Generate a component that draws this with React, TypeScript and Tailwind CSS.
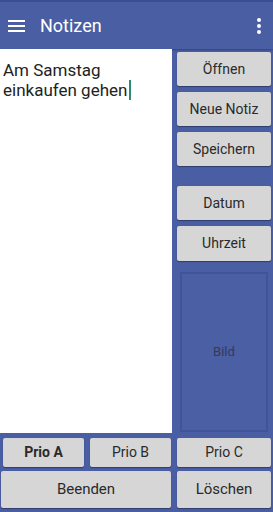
import React from "react";

const btn =
  "flex items-center justify-center rounded-[2px] bg-[#d6d6d6] text-[#2a2a2a] shadow-[0_1px_1px_rgba(0,0,0,0.35)] text-[14px]";

export default function App() {
  return (
    <div
      className="w-[273px] h-[512px] bg-[#4a5ea3] flex flex-col overflow-hidden"
      style={{ fontFamily: "Roboto, 'Noto Sans', sans-serif" }}
    >
      <div className="h-[2px] bg-[#3d4f92]" />
      <div className="h-[47px] flex items-center bg-[#4a5ea3] shadow-[0_1px_2px_rgba(0,0,0,0.3)]">
        <svg width="18" height="14" viewBox="0 0 18 14" className="ml-[8px]">
          <rect x="0" y="1" width="17" height="2" fill="#fff" />
          <rect x="0" y="6" width="17" height="2" fill="#fff" />
          <rect x="0" y="11" width="17" height="2" fill="#fff" />
        </svg>
        <span className="ml-[14px] text-white text-[18px] font-normal">Notizen</span>
        <div className="flex-1" />
        <svg width="6" height="18" viewBox="0 0 6 18" className="mr-[11px]">
          <circle cx="3" cy="3" r="2" fill="#fff" />
          <circle cx="3" cy="9" r="2" fill="#fff" />
          <circle cx="3" cy="15" r="2" fill="#fff" />
        </svg>
      </div>
      <div className="flex flex-1 gap-[5px]">
        <div className="w-[172px] flex flex-col">
          <div className="h-[384px] bg-white px-[3px] pt-[11px] text-[17px] leading-[20px] text-[#222]">
            Am Samstag
            <br />
            einkaufen gehen
            <span className="inline-block w-[2px] h-[20px] bg-[#2e8b7a] align-[-4px] ml-[2px]" />
          </div>
          <div className="flex gap-[6px] mt-[5px] pl-[3px] pr-[1px]">
            <div className={`${btn} w-[81px] h-[29px] text-[13px] font-bold`}>Prio A</div>
            <div className={`${btn} w-[81px] h-[29px] text-[13px]`}>Prio B</div>
          </div>
          <div className={`${btn} mt-[4px] ml-[1px] w-[170px] h-[37px] text-[15px]`}>Beenden</div>
        </div>
        <div className="w-[94px] flex flex-col pt-[3px]">
          <div className={`${btn} h-[34px]`}>Öffnen</div>
          <div className={`${btn} h-[34px] mt-[6px]`}>Neue Notiz</div>
          <div className={`${btn} h-[34px] mt-[6px]`}>Speichern</div>
          <div className={`${btn} h-[34px] mt-[20px]`}>Datum</div>
          <div className={`${btn} h-[35px] mt-[6px]`}>Uhrzeit</div>
          <div className="mt-[11px] mx-[3px] h-[160px] border-2 border-[#41539a] bg-[#4b5fa4] flex items-center justify-center text-[13px] text-[#333a5a]">
            Bild
          </div>
          <div className={`${btn} h-[29px] mt-[6px] text-[13px]`}>Prio C</div>
          <div className={`${btn} h-[37px] mt-[4px] text-[15px]`}>Löschen</div>
        </div>
      </div>
    </div>
  );
}
